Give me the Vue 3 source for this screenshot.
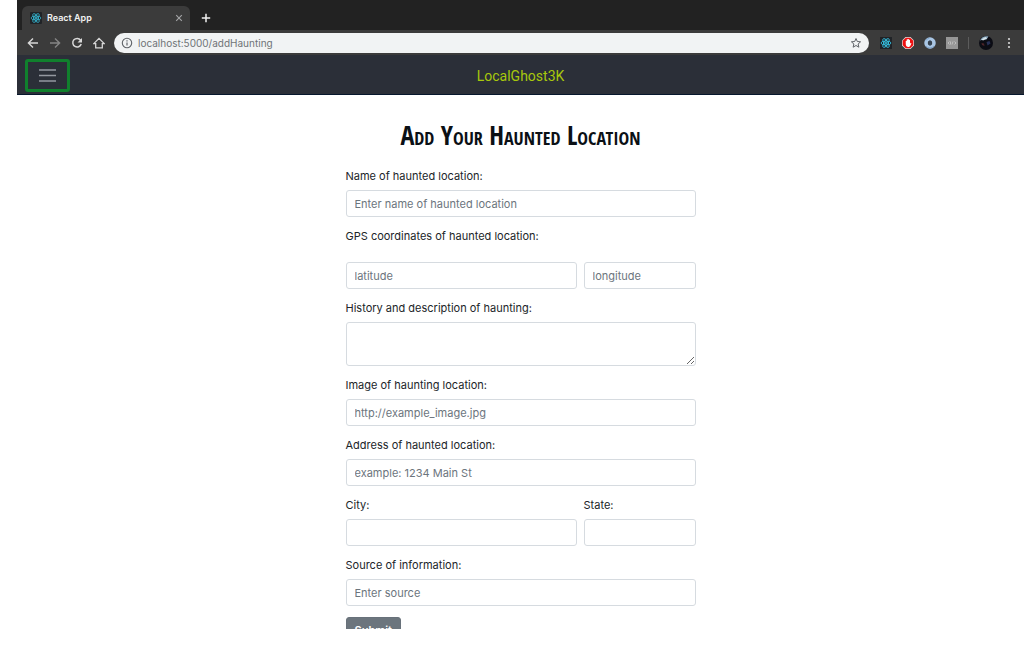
<script setup>
import { reactive, ref } from 'vue'

const address = ref('localhost:5000/addHaunting')
const haunting = reactive({
  name: '',
  latitude: '',
  longitude: '',
  history: '',
  image: '',
  street: '',
  city: '',
  state: '',
  source: ''
})
</script>

<template>
  <div class="window">
    <header class="tabs">
      <div class="tab">
        <svg class="react" viewBox="0 0 24 24" aria-hidden="true">
          <rect width="24" height="24" rx="2" fill="#202327" />
          <g fill="none" stroke="#35bcd8" stroke-width="1.5">
            <ellipse cx="12" cy="12" rx="10" ry="4" />
            <ellipse cx="12" cy="12" rx="10" ry="4" transform="rotate(60 12 12)" />
            <ellipse cx="12" cy="12" rx="10" ry="4" transform="rotate(120 12 12)" />
          </g>
          <circle cx="12" cy="12" r="2" fill="#35bcd8" />
        </svg>
        <span class="tab-title">React App</span>
        <button class="plain close" type="button" aria-label="Close tab">
          <svg viewBox="0 0 8 8"><path d="M1.2 1.2l5.6 5.6M6.8 1.2L1.2 6.8" stroke="#a5a6a8" stroke-width="1.1" /></svg>
        </button>
      </div>
      <button class="plain new-tab" type="button" aria-label="New tab">
        <svg viewBox="0 0 10 10"><path d="M5 .8v8.4M.8 5h8.4" stroke="#f1f1f1" stroke-width="1.5" /></svg>
      </button>
    </header>

    <div class="toolbar">
      <div class="history">
        <button class="plain" type="button" aria-label="Back">
          <svg viewBox="0 0 12 12" fill="none" stroke="#d8d8d8" stroke-width="1.4"><path d="M11 6H1.6M6 1.4L1.4 6 6 10.6" /></svg>
        </button>
        <button class="plain" type="button" aria-label="Forward">
          <svg viewBox="0 0 12 12" fill="none" stroke="#858585" stroke-width="1.4"><path d="M1 6h9.4M6 1.4L10.6 6 6 10.6" /></svg>
        </button>
        <button class="plain" type="button" aria-label="Reload">
          <svg viewBox="0 0 12 12"><path d="M9.6 3.2A4.3 4.3 0 1 0 10.2 7" fill="none" stroke="#d8d8d8" stroke-width="1.5" /><path d="M11 .9v4.5H6.5z" fill="#d8d8d8" /></svg>
        </button>
        <button class="plain" type="button" aria-label="Home">
          <svg viewBox="0 0 12 12" fill="none" stroke="#d8d8d8" stroke-width="1.3"><path d="M.8 6.6L6 1.4l5.2 5.2H9.3v4.2H2.7V6.6z" /></svg>
        </button>
      </div>
      <div class="address">
        <svg class="info" viewBox="0 0 12 12" aria-hidden="true"><circle cx="6" cy="6" r="4.7" fill="none" stroke="#5f6368" stroke-width="1.1" /><path d="M6 5.4v3.2M6 3.2v1.2" stroke="#5f6368" stroke-width="1.2" /></svg>
        <input v-model="address" class="url" type="text" aria-label="Address" />
        <button class="plain" type="button" aria-label="Bookmark">
          <svg viewBox="0 0 12 12"><path d="M6 1.5l1.3 3 3.3.3-2.5 2.2.8 3.2L6 8.5l-2.9 1.7.8-3.2-2.5-2.2 3.3-.3z" fill="none" stroke="#5f6368" stroke-width="1" stroke-linejoin="round" /></svg>
        </button>
      </div>
      <div class="extensions">
        <button class="plain" type="button" aria-label="React tools">
          <svg class="react" viewBox="0 0 24 24">
            <rect width="24" height="24" fill="#202327" />
            <g fill="none" stroke="#35c4e6" stroke-width="1.7">
              <ellipse cx="12" cy="12" rx="10" ry="4" />
              <ellipse cx="12" cy="12" rx="10" ry="4" transform="rotate(60 12 12)" />
              <ellipse cx="12" cy="12" rx="10" ry="4" transform="rotate(120 12 12)" />
            </g>
            <circle cx="12" cy="12" r="2" fill="#35c4e6" />
          </svg>
        </button>
        <button class="plain" type="button" aria-label="Ad blocker">
          <svg viewBox="0 0 24 24">
            <path d="M7 0h10l7 7v10l-7 7H7l-7-7V7z" fill="#ddd" />
            <path d="M7.6 1.4h8.8l6.2 6.2v8.8l-6.2 6.2H7.6l-6.2-6.2V7.6z" fill="#ee1111" />
            <path d="M7.500 8.200V14c0 4 2.200 6 5 6 2.300 0 3.800-1.200 4.700-3.500l1.700-4.200-1.500-.6-1.400 1.800V6H14.500V4.500h-1.700V4h-1.700v1.200H9.300v3z" fill="#fff" />
          </svg>
        </button>
        <button class="plain" type="button" aria-label="Colour ring">
          <svg viewBox="0 0 24 24">
            <circle cx="12" cy="12" r="8" fill="none" stroke="#a9c6e4" stroke-width="7" />
            <path d="M4 18a10 10 0 0 0 16 0M4 7a10 10 0 0 1 7-5" fill="none" stroke="#7fa4cc" stroke-width="2" />
            <ellipse cx="12" cy="12" rx="3.5" ry="5.5" fill="#334354" />
          </svg>
        </button>
        <button class="plain" type="button" aria-label="Source viewer">
          <svg viewBox="0 0 24 24">
            <rect width="24" height="24" fill="#969696" />
            <path d="M7 9l-3 3 3 3M17 9l3 3-3 3M9 9v6M12 15l2-6" fill="none" stroke="#c6c6c6" stroke-width="1.6" />
          </svg>
        </button>
        <span class="divider"></span>
        <button class="plain profile" type="button" aria-label="Profile">
          <svg viewBox="0 0 28 28">
            <circle cx="14" cy="14" r="14" fill="#0b0c14" />
            <path d="M2 9C5 2 12-1 19 1L15 7 9 7z" fill="#8ba8bd" />
            <path d="M5 7l8-5 3 3-8 4z" fill="#d5e3e9" />
            <path d="M15 12l6-2 2 5-6 4z" fill="#283158" />
            <path d="M5 14l5 1 1 5-5-2z" fill="#4b2429" />
          </svg>
        </button>
        <button class="plain more" type="button" aria-label="Browser menu">
          <svg viewBox="0 0 4 12" fill="#d8d8d8"><circle cx="2" cy="2" r="1.1" /><circle cx="2" cy="6" r="1.1" /><circle cx="2" cy="10" r="1.1" /></svg>
        </button>
      </div>
    </div>

    <nav class="navbar">
      <button class="menu" type="button" aria-label="Menu">
        <svg viewBox="0 0 17 13" stroke="#9498a0" stroke-width="1.4"><path d="M0 1h17M0 6.5h17M0 12h17" /></svg>
      </button>
      <a class="brand" href="#">LocalGhost3K</a>
    </nav>

    <main>
      <h1>Add Your Haunted Location</h1>
      <form @submit.prevent>
        <div class="group">
          <label for="name">Name of haunted location:</label>
          <input id="name" v-model="haunting.name" type="text" placeholder="Enter name of haunted location" />
        </div>
        <fieldset class="group">
          <legend>GPS coordinates of haunted location:</legend>
          <div class="row coordinates">
            <input v-model="haunting.latitude" class="wide" type="text" aria-label="Latitude" placeholder="latitude" />
            <input v-model="haunting.longitude" type="text" aria-label="Longitude" placeholder="longitude" />
          </div>
        </fieldset>
        <div class="group">
          <label for="history">History and description of haunting:</label>
          <textarea id="history" v-model="haunting.history"></textarea>
        </div>
        <div class="group">
          <label for="image">Image of haunting location:</label>
          <input id="image" v-model="haunting.image" type="text" placeholder="http://example_image.jpg" />
        </div>
        <div class="group">
          <label for="street">Address of haunted location:</label>
          <input id="street" v-model="haunting.street" type="text" placeholder="example: 1234 Main St" />
        </div>
        <div class="row">
          <div class="group wide">
            <label for="city">City:</label>
            <input id="city" v-model="haunting.city" type="text" />
          </div>
          <div class="group">
            <label for="state">State:</label>
            <input id="state" v-model="haunting.state" type="text" />
          </div>
        </div>
        <div class="group">
          <label for="source">Source of information:</label>
          <input id="source" v-model="haunting.source" type="text" placeholder="Enter source" />
        </div>
        <button class="submit" type="submit">Submit</button>
      </form>
    </main>
  </div>
</template>

<style>
body {
  background: #fff;
}
</style>

<style scoped>
* {
  box-sizing: border-box;
}
.window {
  display: flex;
  flex-direction: column;
  height: calc(100vh - 20px);
  margin: 0 0 20px 17px;
  overflow: hidden;
  font-family: Inter, "Liberation Sans", sans-serif;
  font-size: 11px;
  color: #212529;
}
svg {
  display: block;
  width: 12px;
  height: 12px;
}
.plain {
  display: block;
  flex: none;
  padding: 0;
  border: 0;
  background: none;
}
.tabs {
  display: flex;
  flex: none;
  align-items: flex-end;
  height: 30px;
  padding-left: 5px;
  background: #222;
}
.tab {
  display: flex;
  align-items: center;
  gap: 5px;
  width: 168px;
  height: 24px;
  padding: 0 7px 0 8px;
  border-radius: 6px 6px 0 0;
  background: #3b3b3b;
  color: #f1f1f1;
}
.tab-title {
  flex: 1;
  font-size: 9px;
  line-height: 12px;
  font-weight: 600;
}
.close svg {
  width: 8px;
  height: 8px;
}
.new-tab {
  margin: 0 11px 7px;
}
.new-tab svg {
  width: 10px;
  height: 10px;
}
.toolbar {
  display: flex;
  flex: none;
  align-items: center;
  gap: 9px;
  height: 25px;
  padding: 0 13px 0 10px;
  background: #3b3b3b;
}
.history {
  display: flex;
  gap: 10px;
}
.address {
  display: flex;
  flex: 1;
  align-items: center;
  gap: 5px;
  height: 20px;
  padding: 0 7px;
  border-radius: 10px;
  background: #f1f3f4;
}
.url {
  flex: 1;
  min-width: 0;
  padding: 0;
  border: 0;
  outline: 0;
  background: none;
  font: 10px/14px Inter, "Liberation Sans", sans-serif;
  color: #6f7377;
}
.extensions {
  display: flex;
  align-items: center;
  gap: 10px;
  padding-left: 2px;
}
.divider {
  width: 1px;
  height: 12px;
  background: #5c5c5c;
}
.profile svg {
  width: 14px;
  height: 14px;
}
.more {
  padding-left: 4px;
}
.more svg {
  width: 4px;
}
.navbar {
  display: grid;
  grid-template-columns: 1fr auto 1fr;
  flex: none;
  align-items: center;
  height: 40px;
  padding: 2px 8px 0;
  border-bottom: 1px solid #07172d;
  background: #2b2f38;
}
.menu {
  display: flex;
  align-items: center;
  justify-content: center;
  width: 45px;
  height: 33px;
  padding: 0;
  border: 3px solid #10802d;
  border-radius: 3px;
  background: none;
}
.menu svg {
  width: 17px;
  height: 13px;
}
.brand {
  font-family: Roboto, "Liberation Sans", sans-serif;
  font-size: 14px;
  line-height: 20px;
  color: #a8c80c;
  text-decoration: none;
}
main {
  padding: 20px 16px 0;
}
h1 {
  margin: 0 0 13px;
  font: 300 26px/40px "Open Sans Condensed", "Roboto Condensed", Roboto, sans-serif;
  font-variant: small-caps;
  color: #0b1015;
  text-align: center;
}
form {
  max-width: 350px;
  margin: 0 auto;
}
.group {
  display: flex;
  flex-direction: column;
  gap: 5px;
  min-width: 0;
  margin: 0 0 11px;
}
fieldset.group {
  display: block;
  padding: 0;
  border: 0;
}
label,
legend {
  display: block;
  padding: 0;
  line-height: 17px;
}
.row {
  display: grid;
  grid-template-columns: repeat(3, 1fr);
  column-gap: 7px;
}
.coordinates {
  padding-top: 17px;
}
.wide {
  grid-column: span 2;
}
form input,
textarea {
  display: block;
  width: 100%;
  min-width: 0;
  height: 27px;
  padding: 4px 8px;
  border: 1px solid #d6dbe0;
  border-radius: 3px;
  background: #fff;
  font: inherit;
  line-height: 17px;
  color: #495057;
}
textarea {
  height: 44px;
  resize: vertical;
}
form input::placeholder {
  color: #6c757d;
  opacity: 1;
}
.submit {
  height: 27px;
  padding: 0 8px;
  border: 1px solid #68717a;
  border-radius: 3px;
  background: #6c757d;
  font: inherit;
  font-weight: 600;
  line-height: 17px;
  color: #fff;
}
</style>
